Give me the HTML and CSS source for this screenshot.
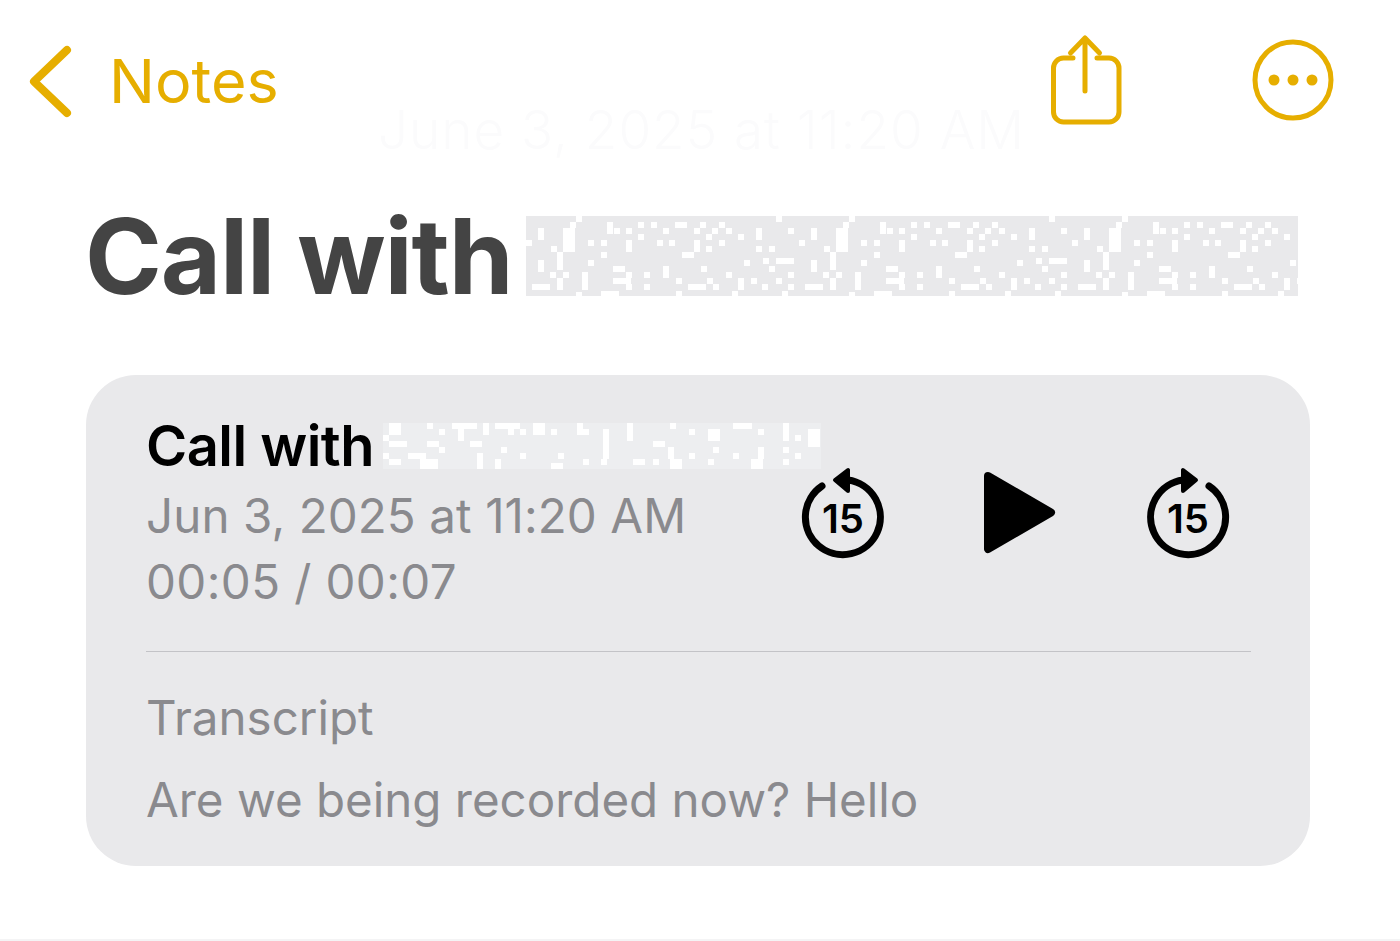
FILE: index.html
```html
<!DOCTYPE html>
<html lang="en">
<head>
<meta charset="utf-8">
<title>Call with</title>
<link rel="stylesheet" href="styles.css">
</head>
<body>
<main class="page">
  <header class="nav">
    <a class="back">
      <svg class="chevron" width="46" height="74" viewBox="0 0 46 74"><path d="M39 6 6 37.500 39 69" fill="none" stroke="#e6ae00" stroke-width="8" stroke-linecap="round" stroke-linejoin="round"/></svg>
      <span class="back-label">Notes</span>
    </a>
    <span class="ghost-date">June 3, 2025 at 11:20 AM</span>
    <div class="nav-actions">
      <svg class="share" width="74" height="94" viewBox="0 0 74 94"><g fill="none" stroke="#e6ae00" stroke-width="5" stroke-linecap="round" stroke-linejoin="round"><path d="M24 27H14.500A10 10 0 0 0 4.500 37V81A10 10 0 0 0 14.500 91H60A10 10 0 0 0 70 81V37A10 10 0 0 0 60 27H48"/><path d="M36 60V7M21.500 22 36 7l14.500 15"/></g></svg>
      <svg class="more" width="82" height="82" viewBox="0 0 82 82"><circle cx="41" cy="41" r="38" fill="none" stroke="#e6ae00" stroke-width="5"/><circle cx="22" cy="41" r="5.500" fill="#e6ae00"/><circle cx="41" cy="41" r="5.500" fill="#e6ae00"/><circle cx="60" cy="41" r="5.500" fill="#e6ae00"/></svg>
    </div>
  </header>

  <div class="title-row">
    <h1 class="title">Call with</h1>
    <svg class="redact-title" width="772" height="80" viewBox="0 0 772 80">
      <defs>
        <pattern id="cells" width="273" height="82" patternUnits="userSpaceOnUse">
          <path fill="#fff" d="M44 6h6v6h-6zM50 0h6v6h-6zM81 6h6v12h-6zM112 6h6v6h-6zM125 6h6v6h-6zM149 6h12v6h-12zM174 6h6v6h-6zM193 6h6v6h-6zM250 0h6v6h-6zM12 12h6v12h-6zM37 12h12v24h-12zM88 12h6v6h-6zM100 12h6v6h-6zM112 18h6v6h-6zM137 12h6v6h-6zM168 12h6v6h-6zM180 18h6v6h-6zM186 12h6v6h-6zM200 12h6v6h-6zM212 18h6v6h-6zM230 12h6v12h-6zM262 12h6v6h-6zM0 24h6v6h-6zM62 24h6v6h-6zM75 24h6v6h-6zM100 24h6v6h-6zM131 24h6v6h-6zM143 24h6v6h-6zM168 24h6v6h-6zM193 24h6v6h-6zM25 30h6v6h-6zM100 30h6v6h-6zM230 30h6v6h-6zM243 30h6v6h-6zM31 36h6v18h-6zM75 36h6v6h-6zM156 36h12v6h-12zM168 30h6v6h-6zM180 30h6v6h-6zM12 44h6v6h-6zM62 44h6v6h-6zM218 44h6v6h-6zM237 42h6v6h-6zM250 42h18v6h-18zM12 50h6v6h-6zM87 50h12v6h-12zM137 50h6v12h-6zM175 50h6v6h-6zM243 50h6v6h-6zM24 56h6v6h-6zM37 56h6v6h-6zM56 56h6v18h-6zM100 56h6v6h-6zM118 56h6v6h-6zM200 56h6v6h-6zM262 56h6v6h-6zM31 62h6v12h-6zM87 62h18v6h-18zM150 62h6v6h-6zM181 62h6v6h-6zM212 62h6v12h-6zM225 62h6v6h-6zM250 62h6v6h-6zM6 68h18v6h-18zM100 68h6v6h-6zM118 68h6v6h-6zM162 68h18v6h-18zM187 68h6v6h-6zM236 68h6v6h-6zM262 68h6v6h-6zM50 76h6v6h-6zM75 75h18v7h-18zM150 75h6v7h-6zM206 75h6v7h-6zM256 75h6v7h-6z"/>
        </pattern>
      </defs>
      <rect width="772" height="80" fill="#e9e9eb"/>
      <rect width="772" height="80" fill="url(#cells)"/>
    </svg>
  </div>

  <section class="card">
    <div class="player">
      <div class="meta">
        <div class="name-row">
          <h2 class="name">Call with</h2>
          <svg class="redact-name" width="438" height="46" viewBox="0 0 438 46">
            <rect width="438" height="46" fill="#edeef0"/>
            <path fill="#fff" d="M6 0h12v12h-12zM0 12h6v6h-6zM44 0h6v6h-6zM56 6h6v6h-6zM69 0h25v6h-25zM75 6h6v6h-6zM100 0h6v12h-6zM112 0h25v6h-25zM125 6h6v6h-6zM6 18h18v6h-18zM44 18h12v6h-12zM75 12h6v6h-6zM87 18h12v6h-12zM137 6h6v6h-6zM150 0h12v12h-12zM168 6h6v6h-6zM194 0h6v12h-6zM200 6h6v6h-6zM220 6h6v12h-6zM244 0h6v18h-6zM287 0h6v6h-6zM306 6h6v6h-6zM325 6h12v12h-12zM350 0h19v6h-19zM375 6h6v6h-6zM400 0h6v18h-6zM412 12h6v6h-6zM425 6h12v18h-12zM0 30h6v6h-6zM25 30h18v6h-18zM56 24h6v6h-6zM94 30h6v6h-6zM118 24h6v6h-6zM137 30h6v6h-6zM175 30h6v6h-6zM220 18h6v18h-6zM270 18h12v6h-12zM285 24h6v12h-6zM306 30h6v6h-6zM330 24h6v6h-6zM350 30h6v6h-6zM375 24h6v12h-6zM400 24h6v6h-6zM412 30h6v6h-6zM6 36h12v6h-12zM37 36h18v10h-18zM94 36h6v10h-6zM112 36h6v10h-6zM168 40h12v6h-12zM200 36h6v6h-6zM218 36h6v6h-6zM250 36h12v6h-12zM270 36h6v6h-6zM287 36h12v10h-12zM325 36h6v6h-6zM368 36h12v10h-12zM400 36h6v6h-6z"/>
          </svg>
        </div>
        <p class="sub date">Jun 3, 2025 at 11:20 AM</p>
        <p class="sub time">00:05 / 00:07</p>
      </div>
      <div class="controls">
        <svg class="skip" width="88" height="100" viewBox="0 0 88 100" aria-label="Back 15">
          <path d="M49 16A37.500 37.500 0 1 1 23 22" fill="none" stroke="#000" stroke-width="7" stroke-linecap="round"/>
          <path d="M36 16 49 6V27z" fill="#000" stroke="#000" stroke-width="4" stroke-linejoin="round"/>
          <text x="44" y="69" class="skip-num" text-anchor="middle">15</text>
        </svg>
        <svg class="play" width="76" height="84" viewBox="0 0 76 84" aria-label="Play"><path d="M8 6 71 42.500 8 79z" fill="#000" stroke="#000" stroke-width="8" stroke-linejoin="round"/></svg>
        <svg class="skip" width="88" height="100" viewBox="0 0 88 100" aria-label="Forward 15">
          <path d="M39 16A37.500 37.500 0 1 0 65 22" fill="none" stroke="#000" stroke-width="7" stroke-linecap="round"/>
          <path d="M52 16 39 6V27z" fill="#000" stroke="#000" stroke-width="4" stroke-linejoin="round"/>
          <text x="44" y="69" class="skip-num" text-anchor="middle">15</text>
        </svg>
      </div>
    </div>
    <hr class="divider">
    <p class="sub transcript-label">Transcript</p>
    <p class="sub transcript-text">Are we being recorded now? Hello</p>
  </section>
</main>
</body>
</html>
```

FILE: styles.css
```css
* { box-sizing: border-box; }
html, body { margin: 0; background: #fff; }
body { font-family: Inter, "Liberation Sans", sans-serif; }

.page {
  width: 1400px;
  height: 941px;
  display: flex;
  flex-direction: column;
  border-bottom: 2px solid #f4f4f5;
  overflow: hidden;
}

.nav {
  position: relative;
  height: 160px;
  padding: 0 66px 0 28px;
  display: flex;
  align-items: center;
  justify-content: space-between;
}
.back { display: flex; align-items: center; gap: 35px; }
.chevron { margin-top: 2px; }
.back-label { margin-top: 3px; font-size: 61px; color: #e6ae00; line-height: 1; }
.nav-actions { display: flex; align-items: center; gap: 129px; }
.share { margin-bottom: 4px; }
.ghost-date {
  position: absolute;
  left: 378px;
  top: 100px;
  font-size: 53px;
  font-weight: 300;
  line-height: 60px;
  letter-spacing: 1px;
  color: #fbfbfc;
  white-space: nowrap;
}

.title-row {
  display: flex;
  align-items: center;
  height: 110px;
  margin-top: 41px;
  padding-left: 85px;
}
.title {
  margin: 0 14px 0 0;
  font-size: 104px;
  font-weight: 700;
  line-height: 1;
  color: #444;
  letter-spacing: -1.200px;
  white-space: nowrap;
}

.card {
  margin: 64px 90px 0 86px;
  height: 491px;
  padding: 41px 59px 0 60px;
  background: #e9e9eb;
  border-radius: 50px;
}
.player { display: flex; justify-content: space-between; height: 235px; }
.meta { width: 600px; flex: none; }
.name-row { display: flex; align-items: center; gap: 9px; height: 60px; }
.redact-name { flex: none; }
.name {
  margin: 0;
  font-size: 56px;
  font-weight: 600;
  line-height: 1;
  color: #000;
  letter-spacing: -0.530px;
  white-space: nowrap;
}
.sub {
  margin: 0;
  font-size: 47.500px;
  line-height: 66px;
  color: #8a8a8e;
  white-space: nowrap;
}
.date { margin-top: 7px; letter-spacing: 0.1px; }
.time { letter-spacing: 0.4px; }
.controls { display: flex; align-items: center; height: 190px; padding-top: 6px; margin-right: 19px; }
.play { margin: 0 88px 4px 93px; }
.skip-num { font-family: Inter, sans-serif; font-size: 40px; font-weight: 600; fill: #000; }
.divider { margin: 0; border: 0; border-top: 1.500px solid #c3c3c7; }
.transcript-label { margin-top: 33px; }
.transcript-text { margin-top: 16px; }
```
